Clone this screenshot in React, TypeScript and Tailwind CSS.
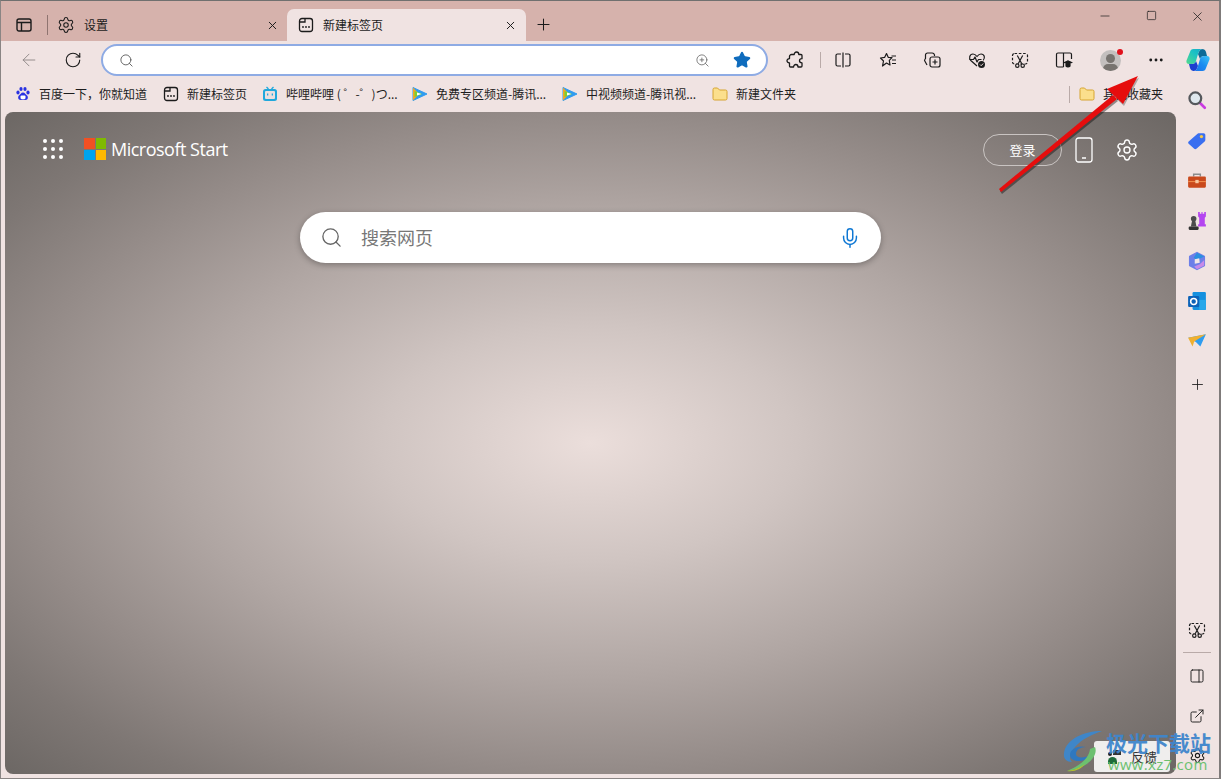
import { ArrowLeft, Plus, RotateCw, Search, Settings, X, ZoomIn, Minus, Square, Star, MoreHorizontal, Mic, ExternalLink, PanelRight } from "lucide-react";

const cjk = "font-['Noto_Sans_CJK_SC','Noto_Sans',sans-serif]";

const TabIcon = () => (
  <svg viewBox="0 0 16 16" className="w-4 h-4 shrink-0" fill="none" stroke="#1b1b1b" strokeWidth="1.300">
    <rect x="1.500" y="1.500" width="13" height="13" rx="2.500" />
    <path d="M1.500 5H7V1.500" />
    <circle cx="5" cy="10" r=".9" fill="#1b1b1b" stroke="none" />
    <circle cx="8" cy="10" r=".9" fill="#1b1b1b" stroke="none" />
    <circle cx="11" cy="10" r=".9" fill="#1b1b1b" stroke="none" />
  </svg>
);

const Folder = () => (
  <svg viewBox="0 0 16 16" className="w-4 h-4 shrink-0">
    <path d="M1 3.500A1.500 1.500 0 0 1 2.500 2h3l2 2h6A1.500 1.500 0 0 1 15 5.500v7a1.500 1.500 0 0 1-1.500 1.500h-11A1.500 1.500 0 0 1 1 12.500z" fill="#fbdf8c" stroke="#d6a431" strokeWidth="1" />
  </svg>
);

const Baidu = () => (
  <svg viewBox="0 0 16 16" className="w-4 h-4 shrink-0" fill="#2932e1">
    <ellipse cx="3" cy="6.500" rx="1.600" ry="2" />
    <ellipse cx="6" cy="3" rx="1.600" ry="2.100" />
    <ellipse cx="10" cy="3" rx="1.600" ry="2.100" />
    <ellipse cx="13" cy="6.500" rx="1.600" ry="2" />
    <path d="M8 6.500c2 0 2.500 2 4 3 1.500 1.200 1 4.500-1.500 4.500-1 0-1.600-.4-2.500-.4s-1.500.4-2.500.4C3 14 2.500 10.700 4 9.500c1.500-1 2-3 4-3z" />
    <rect x="5.500" y="9.500" width="5" height="3.500" rx="1" fill="#fff" />
  </svg>
);

const Bili = () => (
  <svg viewBox="0 0 16 16" className="w-4 h-4 shrink-0" fill="none">
    <path d="M4.500 1 6.500 3M11.500 1 9.500 3" stroke="#20a8dc" strokeWidth="1.300" />
    <rect x="1" y="3" width="14" height="12" rx="2.500" fill="#20a8dc" />
    <rect x="3" y="5" width="10" height="8" rx="1" fill="#eadfdf" />
    <rect x="5" y="7.500" width="1.300" height="2" fill="#20a8dc" />
    <rect x="9.700" y="7.500" width="1.300" height="2" fill="#20a8dc" />
  </svg>
);

const Tencent = () => (
  <svg viewBox="0 0 16 16" className="w-4 h-4 shrink-0">
    <path d="M1 1.500 15 8 1 14.500z" fill="#2f9cf0" stroke="#2f9cf0" strokeWidth="1" strokeLinejoin="round" />
    <path d="M1 1.500 7 8l-6 6.500z" fill="#f5a623" />
    <path d="M2.500 5 10 8l-7.500 3z" fill="#7bd12e" />
    <path d="M5 6.500 9.500 8 5 9.500z" fill="#fff" />
  </svg>
);

const Bookmark = ({ icon, label, width }: { icon: React.ReactNode; label: string; width: string }) => (
  <div className={`flex items-center gap-2 shrink-0 ${width}`}>
    {icon}
    <span className="text-[12px] leading-none text-[#1d1d1d] whitespace-nowrap">{label}</span>
  </div>
);

const Scissors = () => (
  <svg viewBox="0 0 18 18" className="w-[18px] h-[18px]" fill="none" stroke="#1c1c1c" strokeWidth="1.200">
    <rect x="1.500" y="2.500" width="15" height="10.500" rx="2" strokeDasharray="2.600 1.700" />
    <path d="M6.300 4.500 10.800 12.800M11.700 4.500 7.200 12.800" />
    <circle cx="6.300" cy="14.700" r="1.700" fill="#f0e3e2" />
    <circle cx="11.700" cy="14.700" r="1.700" fill="#f0e3e2" />
  </svg>
);

const Copilot = () => (
  <svg viewBox="0 0 24 24" className="w-[24px] h-[24px]">
    <defs>
      <linearGradient id="cpa" x1="0" y1="1" x2="1" y2="0">
        <stop offset="0" stopColor="#54d98c" />
        <stop offset="0.600" stopColor="#1cc2c4" />
        <stop offset="1" stopColor="#18a8c8" />
      </linearGradient>
      <linearGradient id="cpb" x1="0" y1="1" x2="1" y2="0">
        <stop offset="0" stopColor="#1c6fe8" />
        <stop offset="0.500" stopColor="#1a8cf0" />
        <stop offset="1" stopColor="#3cc4f5" />
      </linearGradient>
    </defs>
    <path d="M12 6c1-3 2-5 5-5h-1c2 0 3.500 1 4 3l1 4h-2.500c-2.500 0-4 1-4.500 3z" fill="#0c6a96" />
    <path d="M12 18c-1 3-2 5-5 5h1c-2 0-3.500-1-4-3l-1-4h2.500c2.500 0 4-1 4.500-3z" fill="#1c3fd0" />
    <path d="M7.500 1H17c-3 0-4 2-5 5l-2 7c-.5 2-2 3-4.500 3H3c-2 0-3-1.500-2.500-3.500L4 4C4.500 2 5.500 1 7.500 1z" fill="url(#cpa)" />
    <path d="M16.500 23H7c3 0 4-2 5-5l2-7c.5-2 2-3 4.500-3H21c2 0 3 1.500 2.500 3.500L20 20c-.5 2-1.500 3-3.500 3z" fill="url(#cpb)" />
  </svg>
);

const MsLogo = () => (
  <div className="grid grid-cols-2 gap-px w-[22px] h-[22px] shrink-0">
    <span className="bg-[#f25022]" />
    <span className="bg-[#7fba00]" />
    <span className="bg-[#00a4ef]" />
    <span className="bg-[#ffb900]" />
  </div>
);

const Loupe = () => (
  <svg viewBox="0 0 18 18" className="w-[20px] h-[20px]" fill="none">
    <path d="M11.500 11.500 16 16" stroke="#c93be0" strokeWidth="2.400" strokeLinecap="round" />
    <circle cx="7.500" cy="7.500" r="5.300" fill="#dfe8ee" stroke="#55585c" strokeWidth="2" />
  </svg>
);

const TagIcon = () => (
  <svg viewBox="0 0 18 18" className="w-[20px] h-[20px] mt-[1px]">
    <path d="M1.500 9.500 9.500 2.500c.5-.4 1-.5 1.500-.5h4c.8 0 1.500.7 1.500 1.500V8c0 .5-.2 1-.6 1.400L8.500 16c-.6.5-1.400.5-2 0l-5-4.500c-.6-.6-.6-1.500 0-2z" fill="#3a6ff0" />
    <circle cx="13" cy="5" r="1.500" fill="#f6c945" />
  </svg>
);

const Toolbox = () => (
  <svg viewBox="0 0 18 18" className="w-[20px] h-[20px]">
    <path d="M6 5V3h6v2" fill="none" stroke="#8c8c8c" strokeWidth="1.300" />
    <rect x="1" y="5" width="16" height="10" rx="1" fill="#c9491c" />
    <rect x="1" y="9" width="16" height="1" fill="#f08a4a" />
    <rect x="7.500" y="8" width="3" height="3" fill="#f7c7a0" />
  </svg>
);

const Chess = () => (
  <svg viewBox="0 0 18 18" className="w-[20px] h-[20px]">
    <path d="M10 1h1.500v1.500H13V1h1v1.500h1.500V1H17v4l-1 1v6h1v2h-7v-2h1V6l-1-1z" fill="#b445f0" />
    <circle cx="6" cy="7" r="2.500" fill="#4c4c4c" />
    <path d="M4.500 9h3l1 5h-5z" fill="#4c4c4c" />
    <rect x="1.500" y="14" width="9" height="3" rx="1" fill="#333" />
  </svg>
);

const M365 = () => (
  <svg viewBox="0 0 18 18" className="w-[20px] h-[20px]" fill="none">
    <path d="M9 1.500 15.500 5v8L9 16.500 2.500 13V5z" fill="#6d7fe8" stroke="#6d7fe8" strokeWidth="1.500" strokeLinejoin="round" />
    <path d="M9 1.500 15.500 5 9 8 6 6z" fill="#2a8fe0" />
    <path d="M15.500 8v5L9 16.500 6.500 14l5-2z" fill="#c88be8" />
    <path d="M7 7.500 11 6.500 11.500 10.500 7 11.500z" fill="#f3e6e6" />
  </svg>
);

const Outlook = () => (
  <svg viewBox="0 0 18 18" className="w-[20px] h-[20px]">
    <rect x="5" y="1" width="12" height="16" rx="1" fill="#1490df" />
    <path d="M11 8h6v9h-6z" fill="#28a8ea" />
    <rect x="1" y="4.500" width="10" height="10" rx="1" fill="#0b62b8" />
    <circle cx="6" cy="9.500" r="2.700" fill="none" stroke="#fff" strokeWidth="1.400" />
  </svg>
);

const Plane = () => (
  <svg viewBox="0 0 18 18" className="w-[20px] h-[20px]">
    <path d="M1 6 17 3 12 14 8 10z" fill="#2f9df0" />
    <path d="M1 6 17 3 6.500 9.500 5 14z" fill="#f0b030" />
  </svg>
);

const Tool = ({ children, className = "" }: { children: React.ReactNode; className?: string }) => (
  <div className={`flex items-center justify-center w-6 h-6 shrink-0 ${className}`}>{children}</div>
);

export default function App() {
  return (
    <div className={`relative w-[1221px] h-[779px] overflow-hidden bg-[#f0e3e2] border-t border-[#70706f] border-r-2 border-r-[#7f7b7a] border-l border-l-[#8a8584] border-b border-b-[#8a8584] ${cjk}`}>
      {/* title bar */}
      <div className="flex h-[40px] bg-[#d6b2ac] pl-[15px]">
        <div className="flex items-center h-[32px] mt-2 w-[271px] shrink-0">
          <svg viewBox="0 0 16 16" className="w-4 h-4 shrink-0" fill="none" stroke="#1b1b1b" strokeWidth="1.400">
            <rect x="1" y="2" width="14" height="12" rx="2" />
            <path d="M1 5.500h14M5.500 5.500V14" />
          </svg>
          <span className="w-px h-[20px] bg-[#8f7470] ml-[15px] mr-[9px]" />
          <Settings size={18} strokeWidth={1.400} className="text-[#1b1b1b]" />
          <span className="ml-[9px] text-[12px] text-[#1b1b1b]">设置</span>
          <X size={13} strokeWidth={1.800} className="ml-auto mr-[8px] text-[#1b1b1b]" />
        </div>
        <div className="flex items-center h-[32px] mt-2 w-[239px] shrink-0 bg-[#f0e3e2] rounded-t-[7px] pl-[11px] pr-[9px]">
          <TabIcon />
          <span className="ml-[9px] text-[12px] text-[#1b1b1b]">新建标签页</span>
          <X size={13} strokeWidth={1.800} className="ml-auto text-[#1b1b1b]" />
        </div>
        <Plus size={19} strokeWidth={1.300} className="ml-[8px] mt-[14px] text-[#1b1b1b]" />
        <div className="ml-auto flex items-start gap-[32px] pt-[8px] pr-[14px]">
          <Minus size={14} strokeWidth={1.200} className="text-[#1b1b1b] mr-[1px]" />
          <Square size={11} strokeWidth={1.500} className="text-[#1b1b1b] mx-[1px] mt-[1px]" />
          <X size={15} strokeWidth={1.200} className="text-[#1b1b1b]" />
        </div>
      </div>

      {/* toolbar */}
      <div className="flex items-center h-[38px] pl-[18px]">
        <ArrowLeft size={20} strokeWidth={1.100} className="text-[#8d8785] shrink-0" />
        <RotateCw size={18} strokeWidth={1.500} className="ml-[25px] text-[#1b1b1b] shrink-0" />
        <div className="ml-[19px] flex items-center w-[667px] h-[32px] shrink-0 rounded-full bg-white border-2 border-[#8eabe4] pl-[16px] pr-[15px]">
          <Search size={15} strokeWidth={1.400} className="text-[#555]" />
          <ZoomIn size={15} strokeWidth={1.300} className="ml-auto text-[#666]" />
          <Star size={18} className="ml-[23px] text-[#0f6cbd] fill-[#0f6cbd]" />
        </div>
        <Tool className="ml-[15px]">
          <svg viewBox="0 0 18 18" className="w-[18px] h-[18px]" fill="none" stroke="#1b1b1b" strokeWidth="1.300" strokeLinejoin="round">
            <path d="M6 3.500h2.200C8.200 2 9.300 1 10.500 1s2.300 1 2.300 2.500H15a1 1 0 0 1 1 1v3.200c-1.500 0-2.500.9-2.500 2.100s1 2.100 2.500 2.100V15a1 1 0 0 1-1 1h-3c0-1.500-1-2.500-2.200-2.500S7.600 14.500 7.600 16H4.500a1 1 0 0 1-1-1v-3C2 12 1 11 1 9.800S2 7.600 3.500 7.600V5.500a2 2 0 0 1 2-2z" />
          </svg>
        </Tool>
        <span className="w-px h-[16px] bg-[#b9aaa8] ml-[13px]" />
        <Tool className="ml-[10px]">
          <svg viewBox="0 0 18 18" className="w-[18px] h-[18px]" fill="none" stroke="#1b1b1b" strokeWidth="1.200">
            <path d="M7 3H3.500A1.500 1.500 0 0 0 2 4.500v9A1.500 1.500 0 0 0 3.500 15H7M11 3h3.500A1.500 1.500 0 0 1 16 4.500v9a1.500 1.500 0 0 1-1.500 1.500H11M9 1.500v15" />
          </svg>
        </Tool>
        <Tool className="ml-[21px]">
          <svg viewBox="0 0 18 18" className="w-[18px] h-[18px]" fill="none" stroke="#1b1b1b" strokeWidth="1.200" strokeLinejoin="round">
            <path d="M7.500 2.500 9.200 6.300 13 6.700 10.300 9.400 11 14 7.500 12 3.500 15 4.500 10 1.500 7 5.700 6.300z" />
            <path d="M12.500 5h4.500M13 9h4M13 12.500h4" />
          </svg>
        </Tool>
        <Tool className="ml-[20px]">
          <svg viewBox="0 0 18 18" className="w-[18px] h-[18px]" fill="none" stroke="#1b1b1b" strokeWidth="1.200">
            <path d="M4 14 1.800 10c-.4-.6-.4-1 0-1.500l.7-1V4a2 2 0 0 1 2-2H9a2.500 2.500 0 0 1 2.500 3" />
            <rect x="7" y="6" width="10" height="10" rx="2" />
            <path d="M12 8.500v5M9.500 11h5" />
          </svg>
        </Tool>
        <Tool className="ml-[21px]">
          <svg viewBox="0 0 18 18" className="w-[18px] h-[18px]" fill="none" stroke="#1b1b1b" strokeWidth="1.200" strokeLinejoin="round">
            <path d="M9 15 2.800 9.500C.6 7.400 1.500 3 5 3c2 0 3 1.200 4 2.500C10 4.200 11 3 13 3c3.500 0 4.400 4 2.200 6.300" />
            <path d="M1.500 8.500h4l1.500-2.500 2 5 1.500-2.500h3" />
            <circle cx="13.500" cy="13.500" r="3.500" fill="#1b1b1b" stroke="none" />
            <path d="M12 13.500l1.200 1.200 2-2.200" stroke="#f0e3e2" strokeWidth="1" />
          </svg>
        </Tool>
        <Tool className="ml-[19px]"><Scissors /></Tool>
        <Tool className="ml-[20px]">
          <svg viewBox="0 0 18 18" className="w-[18px] h-[18px]" fill="none" stroke="#1b1b1b" strokeWidth="1.200">
            <path d="M8.500 16H3a1.500 1.500 0 0 1-1.500-1.500v-11A1.500 1.500 0 0 1 3 2h12a1.500 1.500 0 0 1 1.500 1.500V8M8.500 2v14" />
            <path d="M9.500 11.500 13 9.800l3.800 1.700L13 13.200z" fill="#1b1b1b" />
            <path d="M11 13v2c1 1.200 3 1.200 4 0v-2" fill="#1b1b1b" />
          </svg>
        </Tool>
        <div className="ml-[24px] relative w-[21px] h-[21px] shrink-0 rounded-full bg-[#c3bfbe] overflow-hidden">
          <span className="absolute left-[6px] top-[4px] w-[9px] h-[9px] rounded-full bg-[#77736f]" />
          <span className="absolute left-[3px] top-[14px] w-[15px] h-[10px] rounded-full bg-[#77736f]" />
        </div>
        <Tool className="ml-[23px]"><MoreHorizontal size={18} strokeWidth={1.800} className="text-[#1b1b1b]" /></Tool>
        <Tool className="ml-[18px]"><Copilot /></Tool>
        <span className="absolute left-[1116px] top-[48px] w-[6px] h-[6px] rounded-full bg-[#e0101b]" />
      </div>

      {/* bookmarks */}
      <div className="flex items-center h-[33px] pb-[3px] pl-[14px]">
        <Bookmark width="w-[148px]" icon={<Baidu />} label="百度一下，你就知道" />
        <Bookmark width="w-[99px]" icon={<TabIcon />} label="新建标签页" />
        <Bookmark width="w-[150px]" icon={<Bili />} label="哔哩哔哩 ( ゜-゜)つ..." />
        <Bookmark width="w-[150px]" icon={<Tencent />} label="免费专区频道-腾讯..." />
        <Bookmark width="w-[150px]" icon={<Tencent />} label="中视频频道-腾讯视..." />
        <Bookmark width="w-[100px]" icon={<Folder />} label="新建文件夹" />
        <span className="ml-auto w-px h-[17px] bg-[#b9aaa8] mr-[9px]" />
        <div className="mr-[56px]">
          <Bookmark width="" icon={<Folder />} label="其他收藏夹" />
        </div>
      </div>

      {/* body */}
      <div className="flex h-[662px]">
        <div className="relative ml-[4px] w-[1171px] h-[662px] shrink-0 rounded-[8px] overflow-hidden bg-[radial-gradient(ellipse_farthest-corner_at_50%_50%,#ebdedb_0%,#d0c5c2_25%,#b0a6a3_50%,#948b88_70%,#7e7774_85%,#6c6764_100%)]">
          <div className="flex items-center mt-[22px] h-[32px] pl-[38px] pr-[37px]">
            <div className="flex items-center mb-[2px]">
              <div className="grid grid-cols-3 gap-[4px] w-[20px] shrink-0">
                {Array.from({ length: 9 }).map((_, i) => (
                  <span key={i} className="w-[4px] h-[4px] rounded-full bg-white" />
                ))}
              </div>
              <div className="ml-[21px]"><MsLogo /></div>
              <span className="ml-[5px] text-[18px] font-medium text-white font-['Open_Sans',sans-serif] tracking-[-0.5px]">Microsoft Start</span>
            </div>
            <div className="ml-auto flex items-center justify-center w-[79px] h-[32px] rounded-full border border-[#c9c4c2]">
              <span className="text-[13px] text-white">登录</span>
            </div>
            <svg viewBox="0 0 18 26" className="ml-[13px] w-[18px] h-[26px] shrink-0" fill="none" stroke="#fff" strokeWidth="1.300">
              <rect x="1" y="1" width="16" height="24" rx="2.500" />
              <path d="M7 21h4" />
            </svg>
            <Settings size={24} strokeWidth={1.400} className="ml-[22px] text-white" />
          </div>
          <div className="mt-[46px] mx-auto flex items-center w-[581px] h-[51px] rounded-[26px] bg-white shadow-[0_2px_6px_rgba(0,0,0,0.3)] pl-[20px] pr-[20px]">
            <Search size={23} strokeWidth={1.400} className="text-[#666]" />
            <span className="ml-[18px] text-[18px] text-[#777]">搜索网页</span>
            <Mic size={22} strokeWidth={1.600} className="ml-auto text-[#0f78d4]" />
          </div>
          <div className="absolute right-[6px] bottom-[2px] flex items-center gap-[9px] w-[76px] h-[31px] rounded-[3px] bg-[#efeeed] pl-[14px]">
            <span className="relative w-[14px] h-[14px] shrink-0">
              <span className="absolute left-0 top-[2px] w-[4px] h-[4px] rounded-full bg-[#222]" />
              <span className="absolute left-[5px] top-0 w-[8px] h-[5px] bg-[#333]" />
              <span className="absolute left-0 bottom-0 w-[9px] h-[7px] rounded-t-full bg-[#1d6b3a]" />
            </span>
            <span className="text-[13px] text-[#333]">反馈</span>
          </div>
        </div>

        {/* sidebar */}
        <div className="flex flex-col items-center w-[42px] shrink-0 text-[#1b1b1b]">
          <div className="flex flex-col items-center gap-[20px] mt-[-22px]">
            <Loupe />
            <TagIcon />
            <Toolbox />
            <Chess />
            <M365 />
            <Outlook />
            <Plane />
            <Plus size={17} strokeWidth={1.200} className="mt-[5px]" />
          </div>
          <div className="mt-auto flex flex-col items-center mb-[10px]">
            <Scissors />
            <span className="w-[28px] h-px bg-[#b9aaa8] mt-[13px] mb-[15px]" />
            <PanelRight size={16} strokeWidth={1.400} />
            <ExternalLink size={16} strokeWidth={1.400} className="mt-[24px]" />
            <Settings size={17} strokeWidth={1.500} className="mt-[23px]" />
          </div>
        </div>
      </div>

      {/* red annotation arrow */}
      <svg viewBox="0 0 1221 779" className="absolute inset-0 w-[1221px] h-[779px] pointer-events-none">
        <path d="M998 188 1000 191 1116 98 1112 94z" fill="#00000066" transform="translate(1 2)" />
        <path d="M1106 88 1137 75 1122 103z" fill="#00000044" transform="translate(1 2)" />
        <path d="M998 188 1000 191 1116 98 1112 94z" fill="#e60d0d" />
        <path d="M1106 88 1137 75 1122 103z" fill="#e60d0d" />
      </svg>

      {/* site watermark */}
      <div className="absolute left-[1061px] top-[728px] flex pointer-events-none">
        <svg viewBox="0 0 44 44" className="w-[44px] h-[44px]" fill="none">
          <path d="M40 2C22 2 4 10 2 24c-1 6 3 9 8 9C5 28 10 12 40 2z" fill="#3f86c8" />
          <path d="M8 26c0-6 8-10 16-8-6 0-10 3-10 7 0 3 4 4 9 3l8-2c-5 7-23 9-23 0z" fill="#2f78c0" />
          <path d="M33 18c4 10-10 22-28 24 12-5 22-12 23-22z" fill="#6cc070" />
          <path d="M5 42c8-1 14-4 18-7-4 5-10 8-18 7z" fill="#b5c42a" />
        </svg>
        <div className="flex flex-col mt-[1px]">
          <span className="text-[21px] leading-[24px] font-bold text-[#3f86cc] whitespace-nowrap opacity-95">极光下载站</span>
          <span className="mt-[2px] ml-[2px] text-[15px] leading-[16px] font-medium tracking-[0.3px] text-[#6cc070] font-['Open_Sans',sans-serif] whitespace-nowrap">www.xz7.com</span>
        </div>
      </div>
    </div>
  );
}
